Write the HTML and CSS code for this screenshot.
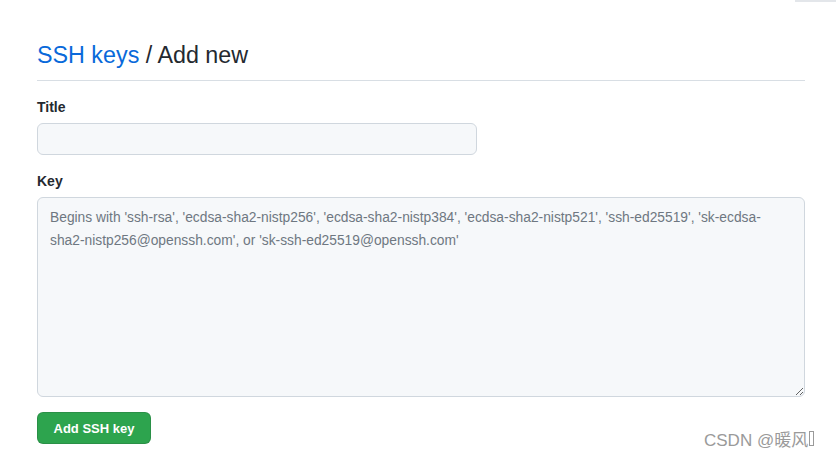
FILE: index.html
```html
<!DOCTYPE html>
<html>
<head>
<meta charset="utf-8">
<link rel="stylesheet" href="styles.css">
</head>
<body>
<div class="corner"></div>
<main class="page">
  <h2 class="heading"><a class="crumb" href="#">SSH keys</a> / Add new</h2>
  <form class="form">
    <div class="group">
      <label class="label">Title</label>
      <input class="input" type="text">
    </div>
    <div class="group">
      <label class="label">Key</label>
      <textarea class="textarea" placeholder="Begins with 'ssh-rsa', 'ecdsa-sha2-nistp256', 'ecdsa-sha2-nistp384', 'ecdsa-sha2-nistp521', 'ssh-ed25519', 'sk-ecdsa-sha2-nistp256@openssh.com', or 'sk-ssh-ed25519@openssh.com'"></textarea>
    </div>
    <button class="btn" type="button">Add SSH key</button>
  </form>
</main>
<div class="watermark">CSDN @暖风<span class="tofu"></span></div>
</body>
</html>
```
FILE: styles.css
```css
* { box-sizing: border-box; }
html, body { margin: 0; padding: 0; background: #fff; }
body {
  width: 836px;
  height: 456px;
  overflow: hidden;
  position: relative;
  font-family: "Liberation Sans", Arial, sans-serif;
  color: #24292f;
}
.corner {
  position: absolute;
  top: 0;
  right: 0;
  width: 41px;
  height: 2px;
  background: #e3e6ea;
}
.page {
  padding: 38px 31px 0 37px;
}
.heading {
  margin: 0;
  font-size: 23.3px;
  font-weight: 400;
  line-height: 34px;
  padding-bottom: 8px;
  border-bottom: 1px solid #d8dee4;
  color: #24292f;
}
.crumb { color: #0969da; text-decoration: none; }
.form { display: flex; flex-direction: column; padding-top: 16px; }
.group { display: flex; flex-direction: column; margin-bottom: 16px; }
.label {
  font-size: 14px;
  font-weight: 700;
  line-height: 20px;
  margin-bottom: 6px;
}
.input {
  width: 440px;
  height: 32px;
  border: 1px solid #d0d7de;
  border-radius: 6px;
  background: #f6f8fa;
  font: inherit;
}
.textarea {
  width: 768px;
  height: 200px;
  border: 1px solid #d0d7de;
  border-radius: 6px;
  background: #f6f8fa;
  padding: 8px 12px;
  font-family: inherit;
  font-size: 13.8px;
  line-height: 23px;
  resize: vertical;
}
.textarea::placeholder { color: #6e7781; }
.btn {
  align-self: flex-start;
  width: 114px;
  height: 32px;
  margin-top: -1px;
  border: 1px solid rgba(27,31,36,0.15);
  border-radius: 6px;
  background: #2da44e;
  color: #fff;
  font-family: inherit;
  font-size: 13px;
  font-weight: 700;
}
.watermark {
  position: absolute;
  left: 704px;
  top: 426px;
  font-size: 17px;
  color: #9a9a9a;
  font-family: "Liberation Sans", "Noto Sans CJK SC", sans-serif;
  display: flex;
  align-items: center;
}
.tofu {
  display: inline-block;
  width: 5px;
  height: 15px;
  border: 1px solid #9a9a9a;
  margin-left: 1px;
}
```
